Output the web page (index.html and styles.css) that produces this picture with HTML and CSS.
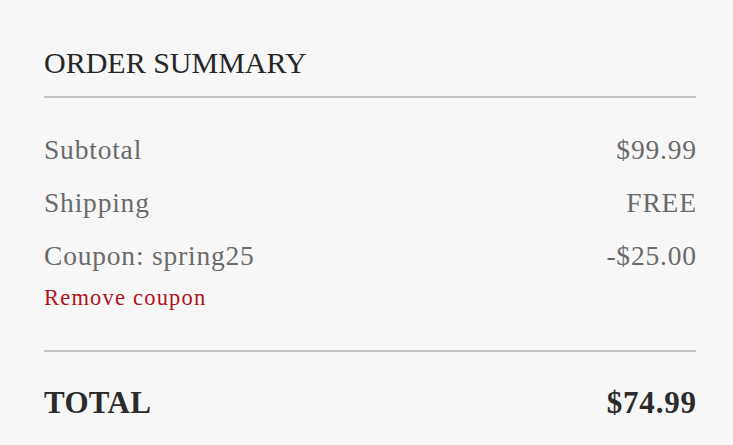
FILE: index.html
```html
<!DOCTYPE html>
<html lang="en">
<head>
<meta charset="utf-8">
<title>Order Summary</title>
<link rel="stylesheet" href="styles.css">
</head>
<body>
<section class="summary">
  <h2 class="summary-title">ORDER SUMMARY</h2>
  <hr class="divider divider-top">
  <div class="rows">
    <div class="row"><span class="label">Subtotal</span><span class="value">$99.99</span></div>
    <div class="row"><span class="label">Shipping</span><span class="value">FREE</span></div>
    <div class="row"><span class="label">Coupon: spring25</span><span class="value">-$25.00</span></div>
    <a class="remove" href="#">Remove coupon</a>
  </div>
  <hr class="divider divider-bottom">
  <div class="total-row"><span class="total-label">TOTAL</span><span class="total-value">$74.99</span></div>
</section>
</body>
</html>
```
FILE: styles.css
```css
html, body {
  margin: 0;
  padding: 0;
  background: #f7f7f7;
}
body {
  font-family: "Liberation Serif", "Times New Roman", serif;
}
.summary {
  padding: 46px 37px 0 44px;
}
.summary-title {
  margin: 0;
  font-size: 30px;
  line-height: 34px;
  font-weight: normal;
  color: #262626;
}
.divider {
  margin: 0;
  border: 0;
  height: 2px;
  background: #c4c4c4;
}
.divider-top {
  margin-top: 16px;
}
.rows {
  display: flex;
  flex-direction: column;
  padding-top: 25px;
}
.row {
  display: flex;
  justify-content: space-between;
  font-size: 27.5px;
  line-height: 53px;
  letter-spacing: 0.8px;
  color: #6a6a6a;
}
.value {
  margin-right: -0.8px;
}
.remove {
  margin-top: 4px;
  font-size: 22.5px;
  line-height: 24px;
  letter-spacing: 1.2px;
  color: #b3121c;
  text-decoration: none;
}
.divider-bottom {
  margin-top: 40px;
}
.total-row {
  display: flex;
  justify-content: space-between;
  margin-top: 33px;
  font-size: 31px;
  line-height: 36px;
  font-weight: bold;
  color: #2b2b2b;
}
.total-label {
  letter-spacing: 0.3px;
}
.total-value {
  letter-spacing: 0.8px;
  margin-right: -0.8px;
}
```
